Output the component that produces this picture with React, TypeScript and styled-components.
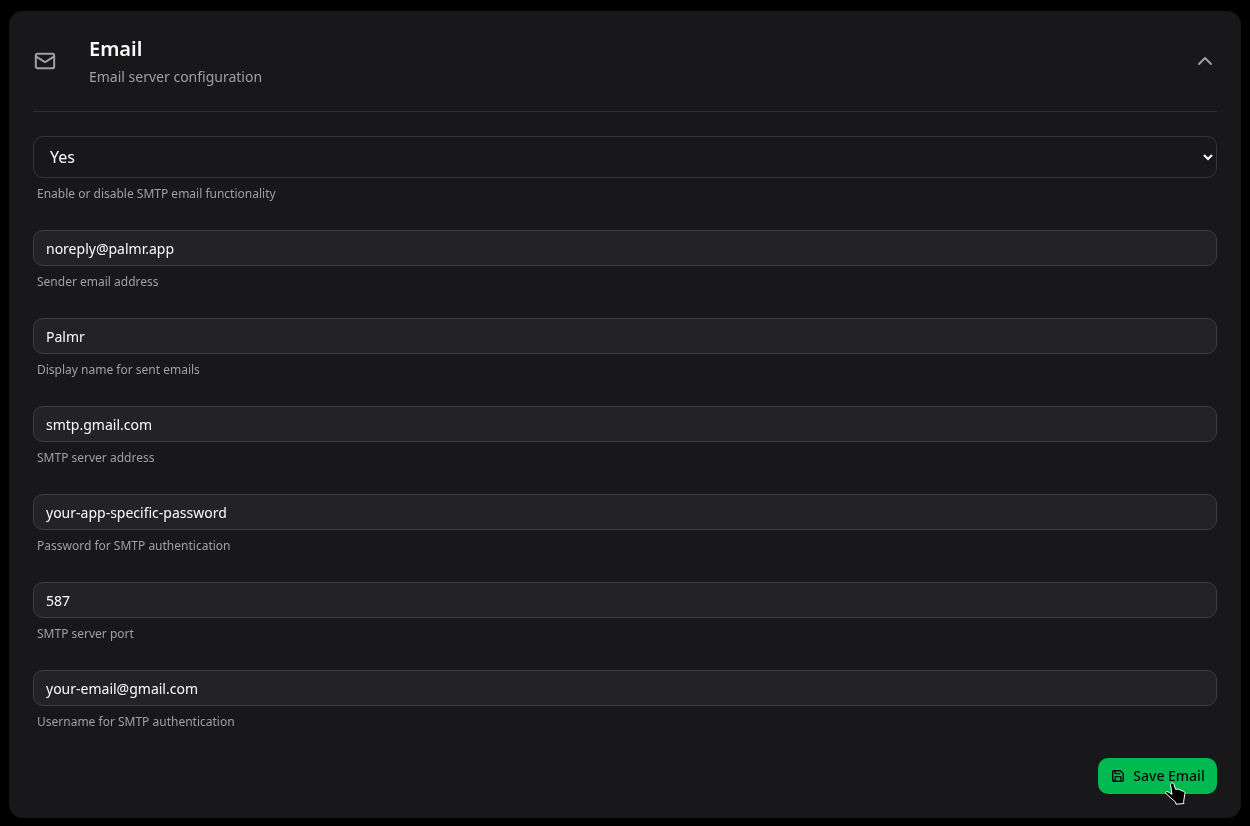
import React from "react";
import styled, { createGlobalStyle } from "styled-components";
import { ChevronUp, Mail, Save } from "lucide-react";

interface Field {
  value: string;
  hint: string;
}

const fields: Field[] = [
  { value: "noreply@palmr.app", hint: "Sender email address" },
  { value: "Palmr", hint: "Display name for sent emails" },
  { value: "smtp.gmail.com", hint: "SMTP server address" },
  { value: "your-app-specific-password", hint: "Password for SMTP authentication" },
  { value: "587", hint: "SMTP server port" },
  { value: "your-email@gmail.com", hint: "Username for SMTP authentication" },
];

function App() {
  return (
    <>
      <GlobalStyle />
      <Page>
        <Card>
          <Header>
            <IconSlot>
              <Mail size={22} strokeWidth={2.2} />
            </IconSlot>
            <Titles>
              <Title>Email</Title>
              <Subtitle>Email server configuration</Subtitle>
            </Titles>
            <Toggle>
              <ChevronUp size={24} strokeWidth={2} />
            </Toggle>
          </Header>
          <Divider />
          <Form>
            <FieldBlock>
              <Select defaultValue="yes">
                <option value="yes">Yes</option>
                <option value="no">No</option>
              </Select>
              <Hint>Enable or disable SMTP email functionality</Hint>
            </FieldBlock>
            {fields.map((field) => (
              <FieldBlock key={field.hint}>
                <Input type="text" defaultValue={field.value} />
                <Hint>{field.hint}</Hint>
              </FieldBlock>
            ))}
          </Form>
          <Footer>
            <SaveButton>
              <Save size={14} strokeWidth={2.4} />
              <span>Save Email</span>
              <Pointer viewBox="0 0 21 23" aria-hidden="true">
                <path
                  d="M5.5 2.4C5.4.7 8.2.2 8.8 1.9l1.8 5.5 2.6-.4 2.7 1.2 2.9 1.2c1 .5 1.4 1.3 1.1 2.5l-1.3 7.6.2 2.1-7.8.6-.4-2.2-3.6-3L1 11.6C0 10.4 1.3 8.8 2.8 9.6L7 12.4z"
                  fill="#000"
                  stroke="#fff"
                  strokeWidth="1"
                  strokeLinejoin="round"
                />
              </Pointer>
            </SaveButton>
          </Footer>
        </Card>
      </Page>
    </>
  );
}

const GlobalStyle = createGlobalStyle`
  html,
  body {
    margin: 0;
    height: 100%;
    background: #000;
  }

  body {
    font-family: "Noto Sans", sans-serif;
    overflow: hidden;
  }
`;

const Page = styled.div`
  padding: 11px 9px 8px;
`;

const Card = styled.div`
  background: #18181b;
  border-radius: 14px;
  padding: 0 24px;
  height: 807px;
  box-sizing: border-box;
  will-change: transform;
`;

const Header = styled.div`
  display: flex;
  align-items: center;
  height: 100px;
`;

const IconSlot = styled.div`
  width: 56px;
  display: flex;
  color: #9f9fa9;
  padding-left: 1px;
  box-sizing: border-box;
`;

const Titles = styled.div`
  flex: 1;
  display: flex;
  flex-direction: column;
  gap: 4px;
  padding-bottom: 1px;
`;

const Title = styled.h2`
  margin: 0;
  font-size: 20px;
  line-height: 28px;
  font-weight: 600;
  color: #fafafa;
`;

const Subtitle = styled.p`
  margin: 0;
  font-size: 14px;
  line-height: 20px;
  color: #9f9fa9;
`;

const Toggle = styled.div`
  display: flex;
  color: #9f9fa9;
`;

const Divider = styled.div`
  height: 1px;
  background: #2f2f33;
`;

const Form = styled.div`
  display: flex;
  flex-direction: column;
  gap: 28px;
  padding-top: 24px;
`;

const FieldBlock = styled.div`
  display: flex;
  flex-direction: column;
  gap: 8px;
`;

const Select = styled.select`
  height: 42px;
  width: 100%;
  box-sizing: border-box;
  padding: 0 12px;
  font-family: inherit;
  font-size: 16px;
  color: #fafafa;
  background: #18181b;
  border: 1px solid #36363a;
  border-radius: 10px;
  outline: none;
  color-scheme: dark;
`;

const Input = styled.input`
  height: 36px;
  width: 100%;
  box-sizing: border-box;
  padding: 0 12px;
  font-family: inherit;
  font-size: 14px;
  color: #fafafa;
  background: #232326;
  border: 1px solid #3c3c40;
  border-radius: 10px;
  outline: none;
`;

const Hint = styled.p`
  margin: 0;
  padding-left: 4px;
  font-size: 12px;
  line-height: 16px;
  color: #9f9fa9;
`;

const Footer = styled.div`
  display: flex;
  justify-content: flex-end;
  padding-top: 28px;
`;

const SaveButton = styled.button`
  position: relative;
  height: 36px;
  width: 119px;
  display: flex;
  align-items: center;
  justify-content: center;
  gap: 8px;
  padding: 0;
  border: none;
  border-radius: 10px;
  background: #00b950;
  color: #0b0b0c;
  font-family: inherit;
  font-size: 14px;
  font-weight: 500;

  > svg:first-child {
    margin-left: 1px;
  }

  span {
    margin-top: -1px;
  }
`;

const Pointer = styled.svg`
  position: absolute;
  left: 67px;
  top: 24px;
  width: 21px;
  height: 23px;
`;

export default App;
